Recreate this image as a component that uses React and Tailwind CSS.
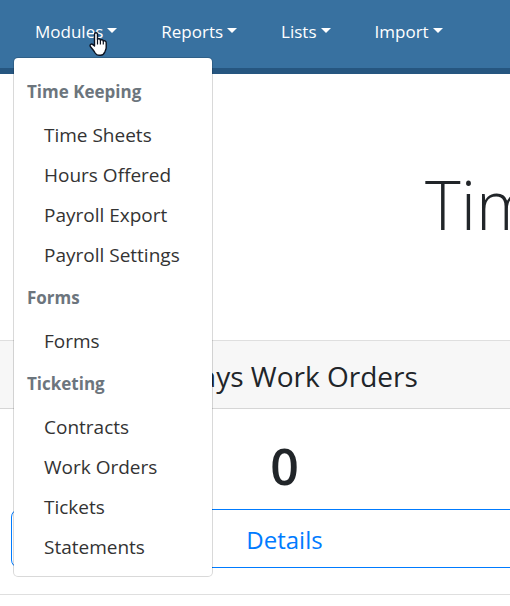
import { useState } from 'react';

const navItems = ['Modules', 'Reports', 'Lists', 'Import'];

const moduleGroups = [
  { title: 'Time Keeping', links: ['Time Sheets', 'Hours Offered', 'Payroll Export', 'Payroll Settings'] },
  { title: 'Forms', links: ['Forms'] },
  { title: 'Ticketing', links: ['Contracts', 'Work Orders', 'Tickets', 'Statements'] },
];

function HandPointer() {
  return (
    <svg className="absolute left-[89px] top-8 z-20 pointer-events-none" width="18" height="24" viewBox="0 0 18 24" aria-hidden="true">
      <path
        d="M5.500 14V2.300C5.500.200 8.500.200 8.500 2.300V7.500C8.900 6.300 11.400 6.500 11.400 8.300 12 7.300 14.300 7.500 14.300 9.200 15 8.400 17.200 8.800 17.200 10.700V15.500C17.200 17.500 16.200 18.500 15.800 20 15 22.200 13.500 23.200 11.500 23.200H9.800C8 23.200 7 22.300 6.200 21 5 18.800 3.500 17.200 1.500 14.800.200 12.900 2.300 11.200 3.900 12.600Z"
        fill="#fff"
        stroke="#0b1220"
        strokeWidth="1.4"
        strokeLinejoin="round"
      />
      <path d="M8.500 7.500V12.500M11.400 8.300V12.500M14.300 9.200V12.500" stroke="#0b1220" strokeWidth="1.2" fill="none" />
    </svg>
  );
}

function ModulesMenu() {
  return (
    <div className="absolute left-[13px] top-[57px] z-10 w-[200px] rounded-[5px] border border-black/15 bg-white bg-clip-padding pt-[11px] pb-[9px]">
      {moduleGroups.map(group => (
        <div key={group.title}>
          <h6 className="h-[46px] px-[13px] text-[17px] leading-[46px] font-bold text-[#6c757d]">{group.title}</h6>
          {group.links.map(link => (
            <a key={link} href="#" className="block h-10 pr-4 pl-[30px] text-[19px] leading-10 whitespace-nowrap text-[#333]">
              {link}
            </a>
          ))}
        </div>
      ))}
    </div>
  );
}

export default function App() {
  const [open, setOpen] = useState('Modules');

  return (
    <div className="overflow-hidden bg-white font-['Open_Sans','Noto_Sans',sans-serif] text-[#212529]">
      <header className="relative border-b-[6px] border-[#265680] bg-[#3871a0]">
        <nav className="flex h-[68px] items-center gap-11 pl-[35px]">
          {navItems.map(item => (
            <button
              key={item}
              type="button"
              aria-expanded={open === item}
              onClick={() => setOpen(open === item ? null : item)}
              className="flex items-center gap-1 pb-1 text-[17px] leading-7 text-white"
            >
              {item}
              <span className="mb-[3px] border-x-[5px] border-t-[5px] border-x-transparent border-t-white" />
            </button>
          ))}
        </nav>
        {open === 'Modules' && <ModulesMenu />}
        <HandPointer />
      </header>

      <main>
        <h1 className="pt-[82px] pb-[88px] pl-[425px] text-[68px] leading-24 font-light whitespace-nowrap">Time</h1>

        <section className="-mr-[69px] -ml-[10px] border-y border-[#dfdfdf] text-center">
          <h4 className="border-b border-[#d6d6d6] bg-[#f7f7f7] pt-[17px] pb-[14px] text-[28px] leading-9">Todays Work Orders</h4>
          <div className="px-[21px] pt-6 pb-[26px]">
            <p className="pb-[10px] text-[50px] leading-[66px] font-semibold">0</p>
            <a href="#" className="block rounded-lg border border-[#007bff] pt-[14px] pb-[11px] text-[24px] leading-8 text-[#007bff]">
              Details
            </a>
          </div>
        </section>
      </main>
    </div>
  );
}
